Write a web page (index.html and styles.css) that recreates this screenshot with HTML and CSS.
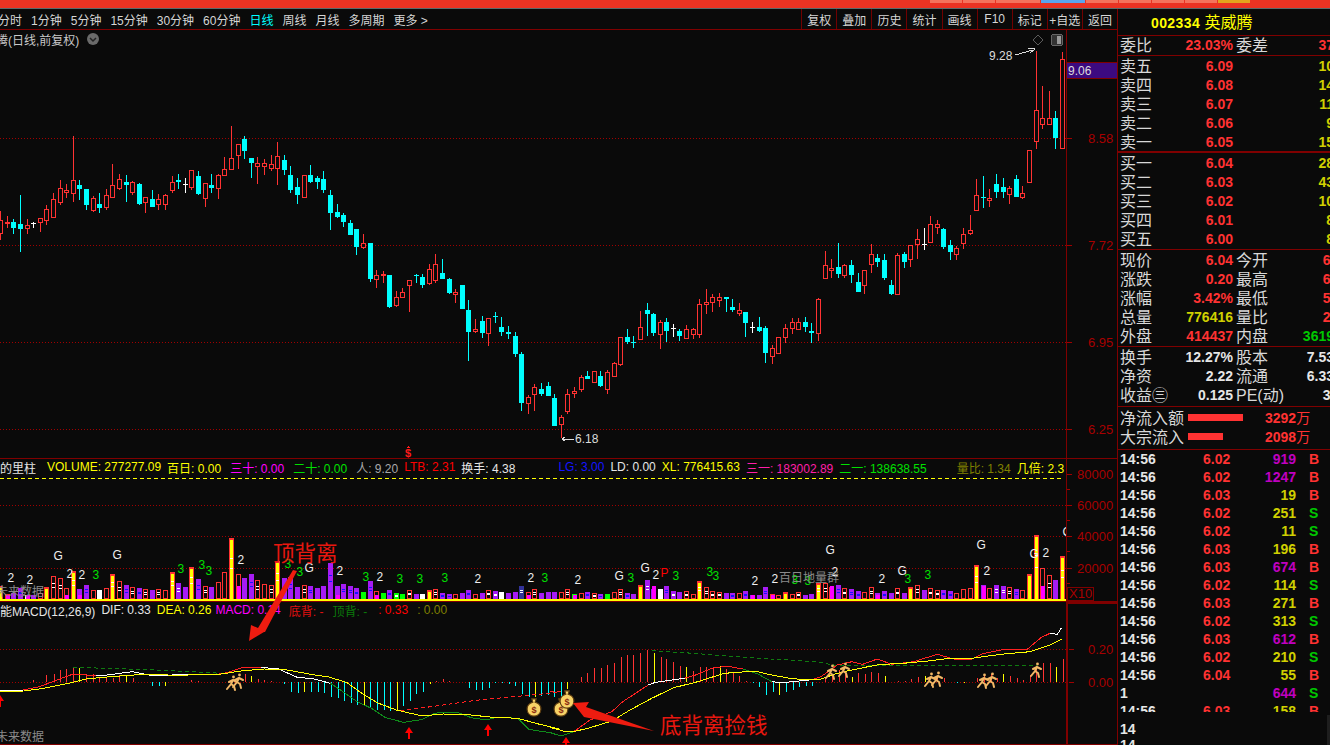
FILE: index.html
```html
<!DOCTYPE html>
<html lang="zh">
<head>
  <meta charset="UTF-8">
  <title>英威腾 日线</title>
  <link rel="stylesheet" href="styles.css">
</head>
<body>
  <div class="app">
    <div class="topbar">
      <span class="tab"></span><span class="tab"></span><span class="tab tab-wide"></span><span class="tab tab-wide tab-blue"></span>
      <span class="tab"></span><span class="tab"></span><span class="tab"></span><span class="tab"></span><span class="tab tab-yellow"></span>
    </div>
    <div class="main">
      <div class="left">
        <div class="toolbar">
          <div class="periods">
            <span>分时</span><span>1分钟</span><span>5分钟</span><span>15分钟</span><span>30分钟</span><span>60分钟</span>
            <span class="active">日线</span><span>周线</span><span>月线</span><span>多周期</span><span>更多 &gt;</span>
          </div>
          <div class="tools">
            <span>复权</span><span>叠加</span><span>历史</span><span>统计</span><span>画线</span><span>F10</span><span>标记</span><span>+自选</span><span>返回</span>
          </div>
        </div>

        <div class="pane pane-price">
          <div class="plot">
            <svg class="chart" id="priceChart"></svg>
            <div class="pane-title">
              <span class="stock-title">腾(日线,前复权)</span>
              <svg class="title-btn" viewBox="0 0 12 12">
                <circle cx="6" cy="6" r="6" fill="#6a6a6a"/>
                <path d="M3 5l3 3 3-3" fill="none" stroke="#222" stroke-width="1.5"/>
              </svg>
            </div>
          </div>
          <div class="axis"><svg class="chart" id="priceAxis"></svg></div>
        </div>

        <div class="pane pane-vol">
          <div class="plot">
            <svg class="chart" id="volChart"></svg>
            <div class="legend">
              <span class="c-white first">的里柱</span>
              <span class="c-yellow">VOLUME: 277277.09</span>
              <span class="c-yellow">百日: 0.00</span>
              <span class="c-magenta wide">三十: 0.00</span>
              <span class="c-green wide">二十: 0.00</span>
              <span class="c-gray wide">人: 9.20</span>
              <span class="c-red">LTB: 2.31</span>
              <span class="c-white">换手: 4.38</span>
              <span class="c-blue gap-lg">LG: 3.00</span>
              <span class="c-white">LD: 0.00</span>
              <span class="c-yellow">XL: 776415.63</span>
              <span class="c-pink">三一: 183002.89</span>
              <span class="c-green">二一: 138638.55</span>
              <span class="c-olive gap-sm">量比: 1.34</span>
              <span class="c-yellow">几倍: 2.3</span>
            </div>
          </div>
          <div class="axis"><svg class="chart" id="volAxis"></svg></div>
        </div>

        <div class="pane pane-macd">
          <div class="plot">
            <svg class="chart" id="macdChart"></svg>
            <div class="legend">
              <span class="c-white first">能MACD(12,26,9)</span>
              <span class="c-white">DIF: 0.33</span>
              <span class="c-yellow m2">DEA: 0.26</span>
              <span class="c-magenta">MACD: 0.14</span>
              <span class="c-darkred m4">底背: -</span>
              <span class="c-darkgreen m5">顶背: -</span>
              <span class="c-red m7">: 0.33</span>
              <span class="c-olive m5">: 0.00</span>
            </div>
          </div>
          <div class="axis axis-macd"><svg class="chart" id="macdAxis"></svg></div>
        </div>

        <svg class="overlay" id="notes"></svg>
      </div>

      <div class="right">
        <div class="stock-head"><b>002334</b> 英威腾</div>

        <div class="group">
          <div class="row row-ratio"><span>委比</span><b class="red">23.03%</b><span class="label2">委差</span><b class="red">37</b></div>
        </div>
        <div class="group group-thick">
          <div class="row"><span>卖五</span><b class="red">6.09</b><i></i><b class="yellow">10</b></div>
          <div class="row"><span>卖四</span><b class="red">6.08</b><i></i><b class="yellow">14</b></div>
          <div class="row"><span>卖三</span><b class="red">6.07</b><i></i><b class="yellow">11</b></div>
          <div class="row"><span>卖二</span><b class="red">6.06</b><i></i><b class="yellow">9</b></div>
          <div class="row"><span>卖一</span><b class="red">6.05</b><i></i><b class="yellow">15</b></div>
        </div>
        <div class="group group-pad">
          <div class="row"><span>买一</span><b class="red">6.04</b><i></i><b class="yellow">28</b></div>
          <div class="row"><span>买二</span><b class="red">6.03</b><i></i><b class="yellow">43</b></div>
          <div class="row"><span>买三</span><b class="red">6.02</b><i></i><b class="yellow">10</b></div>
          <div class="row"><span>买四</span><b class="red">6.01</b><i></i><b class="yellow">8</b></div>
          <div class="row"><span>买五</span><b class="red">6.00</b><i></i><b class="yellow">8</b></div>
        </div>
        <div class="group group-pad">
          <div class="row"><span>现价</span><b class="red">6.04</b><span class="label2">今开</span><b class="red far">6.00</b></div>
          <div class="row"><span>涨跌</span><b class="red">0.20</b><span class="label2">最高</span><b class="red far">6.13</b></div>
          <div class="row"><span>涨幅</span><b class="red">3.42%</b><span class="label2">最低</span><b class="red far">5.93</b></div>
          <div class="row"><span>总量</span><b class="yellow">776416</b><span class="label2">量比</span><b class="red far">2.36</b></div>
          <div class="row"><span>外盘</span><b class="red">414437</b><span class="label2">内盘</span><b class="green">3619</b></div>
        </div>
        <div class="group group-fin">
          <div class="row"><span>换手</span><b>12.27%</b><span class="label2">股本</span><b>7.53</b></div>
          <div class="row"><span>净资</span><b>2.22</b><span class="label2">流通</span><b>6.33</b></div>
          <div class="row"><span>收益㊂</span><b>0.125</b><span class="label2">PE(动)</span><b class="far">36.2</b></div>
        </div>
        <div class="group group-flow">
          <div class="flow"><span class="flow-name">净流入额</span><div class="flow-track"><div class="flow-bar" style="width:55px"></div></div><span class="flow-val"><b>3292</b>万</span></div>
          <div class="flow"><span class="flow-name">大宗流入</span><div class="flow-track"><div class="flow-bar" style="width:35px"></div></div><span class="flow-val"><b>2098</b>万</span></div>
        </div>

        <div class="trades">
          <div class="trade"><span>14:56</span><span class="red">6.02</span><span class="vol purple">919</span><span class="red">B</span></div>
          <div class="trade"><span>14:56</span><span class="red">6.02</span><span class="vol purple">1247</span><span class="red">B</span></div>
          <div class="trade"><span>14:56</span><span class="red">6.03</span><span class="vol">19</span><span class="red">B</span></div>
          <div class="trade"><span>14:56</span><span class="red">6.02</span><span class="vol">251</span><span class="green">S</span></div>
          <div class="trade"><span>14:56</span><span class="red">6.02</span><span class="vol">11</span><span class="green">S</span></div>
          <div class="trade"><span>14:56</span><span class="red">6.03</span><span class="vol">196</span><span class="red">B</span></div>
          <div class="trade"><span>14:56</span><span class="red">6.03</span><span class="vol purple">674</span><span class="red">B</span></div>
          <div class="trade"><span>14:56</span><span class="red">6.02</span><span class="vol">114</span><span class="green">S</span></div>
          <div class="trade"><span>14:56</span><span class="red">6.03</span><span class="vol">271</span><span class="red">B</span></div>
          <div class="trade"><span>14:56</span><span class="red">6.02</span><span class="vol">313</span><span class="green">S</span></div>
          <div class="trade"><span>14:56</span><span class="red">6.03</span><span class="vol purple">612</span><span class="red">B</span></div>
          <div class="trade"><span>14:56</span><span class="red">6.02</span><span class="vol">210</span><span class="green">S</span></div>
          <div class="trade"><span>14:56</span><span class="red">6.04</span><span class="vol">55</span><span class="red">B</span></div>
          <div class="trade"><span>1</span><span class="red"></span><span class="vol purple">644</span><span class="green">S</span></div>
          <div class="trade"><span>14:56</span><span class="red">6.03</span><span class="vol">158</span><span class="red">B</span></div>
        </div>
        <div class="trade-tail">
          <div>14</div>
          <div>14</div>
        </div>
        <div class="scroll-stub"></div>
      </div>
    </div>
  </div>
  <script src="chart.js"></script>
</body>
</html>
```

FILE: styles.css
```css
:root {
  --bg: #0a0a0a;
  --line: #800000;
  --red: #ff3232;
  --text: #dcdcdc;
}
* { box-sizing: border-box; }
html, body { margin: 0; height: 100%; background: var(--bg); overflow: hidden; }
body {
  font-family: "Liberation Sans", "Noto Sans CJK SC", sans-serif;
  font-size: 12px;
  color: var(--text);
}
.app {
  width: 1330px;
  height: 745px;
  display: flex;
  flex-direction: column;
  overflow: hidden;
}

/* top strip */
.topbar {
  height: 9px;
  flex: none;
  display: flex;
  gap: 1px;
  padding-left: 930px;
  background: #ea3323;
  border-bottom: 1px solid #5a6a6a;
}
.tab { width: 32px; height: 3px; background: #f4735c; }
.tab-wide { width: 44px; }
.tab-blue { background: #5aa5ee; }
.tab-yellow { background: #e3a31c; }

.main { flex: 1; display: flex; min-height: 0; }
.left {
  width: 1118px;
  flex: none;
  position: relative;
  display: flex;
  flex-direction: column;
  border-right: 1px solid var(--line);
}

/* toolbar */
.toolbar {
  height: 21px;
  flex: none;
  display: flex;
  justify-content: space-between;
  align-items: stretch;
  border-bottom: 1px solid var(--line);
  color: #d6d6d6;
}
.periods { display: flex; gap: 9px; align-items: center; margin-left: -2px; }
.periods .active { color: #00ffff; }
.tools { display: flex; }
.tools span {
  width: 35.1px;
  display: flex;
  align-items: center;
  justify-content: center;
  border-left: 1px solid #700000;
  white-space: nowrap;
}

/* chart panes */
.pane { display: flex; flex: none; border-bottom: 1px solid var(--line); }
.pane-price { height: 429px; }
.pane-vol { height: 143px; }
.pane-macd { flex: 1; }
.plot { width: 1066px; flex: none; position: relative; overflow: hidden; }
.axis { flex: 1; position: relative; border-left: 1px solid var(--line); }
.axis-macd { border-left-width: 2px; border-top: 2px solid var(--line); }
.chart { position: absolute; left: 0; top: 0; width: 100%; height: 100%; shape-rendering: crispEdges; }
.overlay { position: absolute; left: 0; top: 0; width: 100%; height: 100%; pointer-events: none; }

.pane-title { position: relative; display: flex; align-items: center; gap: 8px; height: 18px; margin-left: -4px; }
.stock-title { color: #c8c8c8; font-size: 12px; white-space: nowrap; }
.title-btn { width: 12px; height: 12px; }

.legend { position: relative; display: flex; gap: 6px; height: 16px; align-items: center; white-space: nowrap; }
.legend .first { margin-right: 5px; }
.legend .wide { margin-left: 3px; }
.legend .gap-sm { margin-left: 24px; }
.legend .gap-lg { margin-left: 37px; }
.pane-macd .legend { gap: 4px; }
.pane-macd .legend .first { margin-right: 2px; }
.legend .m2 { margin-left: 2px; }
.legend .m4 { margin-left: 4px; }
.legend .m5 { margin-left: 5px; }
.legend .m7 { margin-left: 7px; }
.c-white { color: #e6e6e6; }
.c-yellow { color: #ffff00; }
.c-magenta { color: #ff00ff; }
.c-pink { color: #ff1fa8; }
.c-green { color: #00e000; }
.c-gray { color: #a8a8a8; }
.c-red { color: #ff0000; }
.c-darkred { color: #e01010; }
.c-blue { color: #1414ff; }
.c-olive { color: #808000; }
.c-darkgreen { color: #0a7a0a; }

/* svg text */
text { font-family: "Liberation Sans", "Noto Sans CJK SC", sans-serif; shape-rendering: auto; }
.t-axis { fill: #a80000; font-size: 13px; }
.t-price { fill: #dcdcdc; font-size: 12px; }
.t-mark { fill: #f0f0f0; font-size: 12px; }
.t-mark3 { fill: #00e000; font-size: 12px; }
.t-markp { fill: #ff0000; font-size: 12px; }
.t-faint { fill: #8a8a8a; font-size: 12px; }
.t-note { fill: #e8170f; font-size: 21.5px; }
.t-bag { fill: #8a2a10; font-size: 8px; font-weight: bold; }
.t-sell { fill: #ff1a1a; font-size: 11px; font-weight: bold; }

/* quote panel */
.right { flex: 1; position: relative; overflow: hidden; font-size: 16px; color: #d8d8d8; }
.stock-head {
  height: 27px;
  padding-left: 33px;
  color: #ffff00;
  line-height: 28px;
  border-bottom: 1px solid var(--line);
}
.stock-head b { font-size: 14px; letter-spacing: 0.4px; }
.group { border-bottom: 1px solid var(--line); padding-left: 2px; }
.group-thick { border-bottom-width: 2px; }
.group-pad { padding-bottom: 1px; }
.group-fin { padding-bottom: 2px; }
.group-flow { padding-top: 1px; padding-bottom: 3px; }
.row {
  display: grid;
  grid-template-columns: 50px 63px 51px 66px;
  height: 19px;
  line-height: 21px;
  white-space: nowrap;
}
.row-ratio { line-height: 19px; }
.row b {
  font-size: 14px;
  text-align: right;
  color: #e6e6e6;
}
.row b:last-child { padding-right: 16px; }
.row b.far:last-child { padding-right: 0; }
.label2 { padding-left: 3px; }
.red, .row b.red { color: var(--red); }
.yellow, .row b.yellow { color: #d0d000; }
.green, .row b.green { color: #00c800; }
.purple { color: #c000c0; }

.flow { display: flex; height: 19px; line-height: 21px; white-space: nowrap; }
.flow-name { width: 68px; }
.flow-track { width: 77px; display: flex; align-items: center; }
.flow-bar { height: 7px; background: var(--red); }
.flow-val { color: var(--red); font-size: 14px; }

.trades { height: 262px; overflow: hidden; padding-left: 2px; font-weight: bold; font-size: 14px; }
.trade { display: grid; grid-template-columns: 83px 40px 53px 20px; height: 18px; line-height: 18px; color: #e6e6e6; }
.trade .vol { text-align: right; color: #d0d000; }
.trade .vol.purple { color: #c000c0; }
.trade .green { padding-left: 13px; color: #00c800; }
.trade .red:last-child { padding-left: 13px; }
.trade-tail { margin-top: 9px; padding-left: 2px; font-size: 14px; font-weight: bold; line-height: 16px; color: #e6e6e6; }
.scroll-stub { position: absolute; right: 0; bottom: 0; width: 3px; height: 30px; background: #1e1e1e; }
```

FILE: chart.js
```js
// candle rows: type, body top, body bottom, wick top, wick bottom (3x crop coords + offset)
const candleBlocks = [
  [120, [
    ['r',300,342,273,360],['r',306,312,288,324],['c',306,324,297,342],['c',312,327,225,396],['r',316,327,297,342],
    ['w',309,312,306,324],['r',294,309,294,336],['r',267,303,255,315],['r',237,294,219,294],['r',204,249,180,255],
    ['r',210,219,192,234],['r',180,222,48,246],['c',195,207,180,240],['c',207,255,207,270],['r',234,273,228,276],
    ['c',252,264,219,279],['r',225,264,207,270],['r',195,234,132,234],['r',177,207,162,210],['c',186,195,165,246],
    ['r',186,219,183,225],['c',192,252,189,255],['r',231,249,231,279],['c',237,261,210,261],['r',237,255,222,270],
    ['r',225,255,222,270],['r',186,213,168,219],['c',180,186,162,207],['w',192,195,174,219],['r',150,204,150,210],
    ['c',168,222,153,225],['r',189,237,189,261],['c',195,204,162,219],['r',165,207,162,237],['r',147,168,111,168],
    ['r',114,150,18,150],['r',72,108,72,147],['c',57,93,48,117],['c',114,129,114,174],['r',129,141,111,192],
    ['r',129,141,117,165],['r',132,147,105,153],['r',108,147,66,195],['c',120,150,105,165],['c',165,210,138,219],
    ['c',201,225,174,252],['r',165,234,165,234],['c',165,186,135,189],['c',174,186,168,207],['c',177,210,153,219],
    ['c',225,279,210,330],['c',276,291,252,294],['c',285,306,279,321],['c',309,345,300,345],['c',327,381,327,405],
    ['r',369,384,342,387],['c',369,477,369,486],['r',465,480,450,504],['r',462,468,453,489],['c',465,561,465,564],
    ['r',531,558,513,561]
  ]],
  [240, [
    ['r',156,174,144,174],['r',120,138,120,216],['c',105,108,102,129],['c',111,135,102,144],['r',87,132,72,135],
    ['r',72,123,42,129],['c',99,117,57,117],['c',117,159,114,162],['r',156,165,147,189],['c',135,207,135,207],
    ['c',210,276,180,363],['r',267,276,237,279],['c',243,279,228,294],['r',234,282,234,318],['c',228,231,216,249],
    ['c',261,276,231,288],['c',276,282,258,297],['c',288,342,276,351],['c',342,489,336,513],['r',471,492,465,522],
    ['r',441,465,432,513],['c',447,462,429,468],['c',438,468,426,468],['c',474,558,462,558],['r',531,555,525,594],
    ['r',462,516,447,522],['r',453,461,441,474],['r',411,450,405,456],['c',408,417,393,417],['r',393,429,393,429],
    ['c',408,438,393,441],['r',396,450,390,462],['r',369,411,366,411],['r',291,375,291,378],['c',291,306,267,312],
    ['c',306,309,288,324],['r',261,300,213,300],['c',210,222,189,288],['c',222,279,219,288],['r',246,285,240,327],
    ['c',246,273,234,306],['w',264,267,252,291],['c',273,288,267,303],['r',267,297,255,297],['r',267,285,264,297],
    ['r',192,285,177,294],['r',186,195,147,222],['r',171,189,162,216],['r',171,183,159,201],['c',171,177,171,216],
    ['c',201,210,177,216],['r',210,222,189,228],['c',216,249,216,291],['w',261,264,246,279],['c',261,273,231,276],
    ['c',264,339,258,369],['r',324,351,315,372],['r',291,342,291,342],['r',264,294,252,309],['r',246,267,234,282],
    ['r',246,270,234,270],['c',246,261,231,276],['c',273,279,249,309],['r',177,282,174,303],['r',75,117,33,117],
    ['r',84,93,57,114],['c',81,102,9,114]
  ]],
  [160, [
    ['r',315,348,312,354],['c',315,345,300,369],['c',366,396,339,396],['r',330,378,330,402],['r',282,315,252,339],
    ['c',294,306,282,321],['c',300,354,282,360],['c',375,402,360,405],['r',285,405,279,405],['c',282,306,276,324],
    ['r',255,300,255,321],['r',237,255,207,297],['w',252,255,204,270],['r',192,249,168,249],['r',192,204,180,222],
    ['c',207,261,204,267],['c',255,276,240,300],['r',264,285,258,300],['r',222,252,204,267],['r',210,221,165,225],
    ['r',105,153,57,153],['c',111,114,48,144],['r',114,122,87,141],['c',72,96,42,114],['c',81,96,54,114],
    ['r',84,105,78,132],['c',57,111,45,111],['r',99,114,78,117]
  ]],
  [0, [
    ['r',450,548,450,548],['r',330,425,153,447],['r',355,376,258,386],['r',355,376,273,376],['c',354,414,333,447],
    ['r',178,446,156,446]
  ]]
];

// volume bars: crop y of the bar top + colour (r,p,y,g,w,n) + flags (t ticks, T white ticks, m/M magenta foot)
const volBars = (
  '437y 462rm 460p 445pt 466wm 465p 460r 440y 408rt 414rt 445rm 394yt 447pm 435pt 450r 450w 444r 403yt 423rt 435pt ' +
  '441rt 444pt 448rt 450p 447rt 450r 397yt 429pT 441p 382yt 417pt 438rt 441p 426r 396r 294yt 402rM 414p 402pt 420rt ' +
  '432r 435rt 364yt 414p 411pt 441p 435rt 438pt 444p 438p 369pt 438pm 432pt 438pt 444pt 456g 423pt 453rm 459g 450pt ' +
  '459gT 462g 450rt 462p 462w 450y 447rt 459pt 462pt 462r 459p 450pt 462r 459p 450rt 453pT 456w 459p 456p 438nt ' +
  '456rm 447rt 459p 456p ' +
  '456p 456r 447rt 462gm 459r 456pt 459rt 462pt 462g 456r 447rt 459pt 462p 435y 420pT 447pM 447w 438pt 453pT 456p ' +
  '453rt 462r 423yt 441rt 453rt 456rt 459p 459pt 459r 453pt 465pm 465p 441pt 462rm 465r 456y 462r 456rt 465p 462p ' +
  '429yt 429rt 441rM 435pt 444rt 447pt 453pt 456r 441rt 459pm 453pt 459p 444rt 459p 441y 435rt 450p 444rt 450rt 450pt ' +
  '453pt 459r 447r 444r 375yt 435pM 444r 435pT 438pT 441rt 447pt 450r 402y 285yt 384rM 405rt 420p 348yt'
).split(' ');

const volMarks = [
  ['2',11,578],['2',30,580],['G',57,556],['2',70,574],['2',82,575],['3',96,575],['G',116,555],['3',181,569],['3',202,565],
  ['3',209,571],['2',241,560],['3',288,564],['3',300,572],['G',308,568],['2',340,571],['3',366,577],['2',380,577],['3',400,579],
  ['3',420,579],['3',445,578],['2',478,579],['2',531,578],['3',545,578],['2',578,580],['G',618,576],['3',631,578],['G',644,568],
  ['2',656,575],['P',664,573],['3',676,576],['3',710,572],['3',716,576],['2',755,581],['2',775,579],['3',795,580],['3',808,581],
  ['2',835,572],['G',829,550],['2',882,579],['G',901,571],['3',908,579],['3',928,575],['G',980,545],['2',987,571],['G',1033,554],
  ['2',1046,553],['G',1066,532]
];

// macd histogram, crop "x:y" with optional y suffix for a yellow bar; the two crops have different x scales
const histA = '92:255 130:240 150:238 168:224 186:222 205:218 222:218y 241:238 260:238 278:248 297:248 315:248 334:240 353:243y 371:248 ' +
  '426:272 445:273 463:272y 536:255 555:258 685:238 703:244y 722:252 740:254 760:258 796:268 815:290 834:294 852:290y 870:290 889:290 ' +
  '907:294 926:305 945:310 963:318 982:325 1000:330 1018:330y 1037:340 1055:345 1074:345 1092:348 1111:345y 1129:333 1148:318 1166:298 ' +
  '1184:290 1203:266y 1221:258 1240:253 1258:258 1313:278 1332:285 1350:285 1369:278 1387:264 1406:265 1424:266 1443:272 1461:298 ' +
  '1480:305 1498:305y 1516:302 1535:300';
const histB = '12:305 30:305 48:283y 85:246 103:235 122:220 139:220 157:210 176:205 195:185 213:180 229:180 248:175 268:165 285:175y ' +
  '304:185 320:193 339:200 357:212 375:217y 394:228 412:215 430:216 449:215 467:213y 485:222 503:232 521:243 540:258 557:265 576:275 ' +
  '594:300 612:292 631:300y 648:290 667:285 684:277 703:272 721:272 756:250 775:236 794:225 812:230 830:245y 848:233 866:238 884:232 ' +
  '903:235 921:243y 939:260 957:258 975:258 993:252 1012:246 1030:244y 1065:250 1083:250 1102:260 1120:264 1138:264y 1157:262 1175:250 ' +
  '1193:238 1212:238 1228:250 1247:238y 1265:243 1283:250 1301:255 1320:240 1337:210 1355:205 1374:205 1392:216y 1410:192';

// crop coords to page coords for the macd pane
const ax = (x) => x / 2.8;
const bx = (x) => 550 + x / 2.75;
const my = (y) => 595 + y / 3;
const ptsA = (list) => list.map(([x, y]) => `${ax(x).toFixed(1)},${my(y).toFixed(1)}`).join(' ');
const ptsB = (list) => list.map(([x, y]) => `${bx(x).toFixed(1)},${my(y).toFixed(1)}`).join(' ');

const COLORS = { r: '#ff3232', c: '#00ffff', w: '#ffffff', p: '#a61cf5', y: '#ffff00', g: '#00ff00', n: '#33339a' };

function setup(id) {
  const el = document.getElementById(id);
  const r = el.getBoundingClientRect();
  el.setAttribute('viewBox', `${r.left} ${r.top} ${r.width} ${r.height}`);
  return el;
}
const rect = (x, y, w, h, fill) => `<rect x="${x}" y="${y}" width="${w}" height="${h}" fill="${fill}"/>`;
const hollow = (x, y, w, h, color) => rect(x, y, w, h, color) + rect(x + 1, y + 1, w - 2, Math.max(h - 2, 0), '#0a0a0a');
const hline = (x1, x2, y, color, dash) =>
  `<line x1="${x1}" x2="${x2}" y1="${y + 0.5}" y2="${y + 0.5}" stroke="${color}"${dash ? ` stroke-dasharray="${dash}"` : ''}/>`;
const poly = (points, color, dash) =>
  `<polyline points="${points}" fill="none" stroke="${color}"${dash ? ` stroke-dasharray="${dash}"` : ''}/>`;
const text = (x, y, str, cls) => `<text x="${x}" y="${y}" class="${cls}">${str}</text>`;

const barX = (i) => Math.floor(0.7 + i * 6.595);

function drawPrice() {
  let out = '';
  [138, 245, 342, 429].forEach((y) => { out += hline(0, 1066, y, '#a00000', '1 2'); });

  let i = 0;
  candleBlocks.forEach(([top, rows]) => {
    rows.forEach(([type, bt, bb, wt, wb]) => {
      const x = barX(i++);
      const y1 = Math.round(top + bt / 3);
      const y2 = Math.max(y1 + 1, Math.round(top + bb / 3));
      out += rect(x, Math.round(top + wt / 3), 1, Math.round((wb - wt) / 3), COLORS[type]);
      if (type === 'r') {
        out += hollow(x - 2, y1, 5, y2 - y1, COLORS.r);
      } else {
        out += rect(x - 2, y1, 5, y2 - y1, COLORS[type]);
      }
    });
  });

  // high / low labels
  out += text(989, 60, '9.28', 't-price');
  out += `<path d="M1015 55L1033 50M1028 48L1035 49L1030 53" fill="none" stroke="#dcdcdc"/>`;
  out += `<path d="M562 439H574M562 439l3-2M562 439l3 2" fill="none" stroke="#dcdcdc"/>`;
  out += text(575, 443, '6.18', 't-price');
  // top right buttons
  out += `<path d="M1038 35l5 5-5 5-5-5z" fill="none" stroke="#5c5c5c"/>`;
  out += `<rect x="1051.5" y="34.5" width="11" height="11" rx="2" fill="#333" stroke="#666"/>` + rect(1057, 36, 4, 8, '#999');
  // sell flag
  out += text(405, 457, '$', 't-sell');
  out += `<path d="M408 446l2 2h-4z" fill="#ff1a1a"/>`;
  setup('priceChart').innerHTML = out;

  let axis = '';
  [[138, '8.58'], [245, '7.72'], [342, '6.95'], [429, '6.25']].forEach(([y, label]) => {
    axis += hline(1067, 1072, y, '#a00000');
    axis += text(1088, y + 5, label, 't-axis');
  });
  axis += rect(1067, 62, 50, 17, '#800000') + rect(1067, 63, 50, 15, '#3c0a80');
  axis += text(1068, 75, '9.06', 't-price');
  setup('priceAxis').innerHTML = axis;
}

function drawVolume() {
  let out = '';
  [505, 536, 568].forEach((y) => { out += hline(0, 1066, y, '#a00000', '1 2'); });
  out += hline(0, 1063, 478, '#ffff00', '4 3');

  volBars.forEach((code, i) => {
    const m = code.match(/(\d+)(\w)(\w*)/);
    const type = m[2];
    const flags = m[3];
    const x = barX(i);
    const top = Math.round(440 + Number(m[1]) / 3);
    const h = 599 - top;
    if (type === 'r') {
      out += hollow(x - 2, top, 5, h, COLORS.r);
    } else if (type === 'y') {
      out += rect(x - 2, top, 5, h, COLORS.r) + rect(x - 1, top + 2, 3, h - 2, COLORS.y);
    } else {
      out += rect(x - 2, top, 5, h, COLORS[type]);
    }
    if (flags.includes('t') || flags.includes('T')) {
      const tick = type === 'p' && !flags.includes('T') ? '#1414ff' : '#ffffff';
      out += rect(x - 1, 599 - Math.round(h * 0.5), 3, 1, tick) + rect(x - 1, 599 - Math.round(h * 0.68), 3, 1, tick);
    }
    if (flags.includes('m')) out += rect(x - 1, 595, 4, 4, '#ff00ff');
    if (flags.includes('M')) out += rect(x - 1, 586, 4, 13, '#ff00ff');
  });
  out += rect(0, 599, 1066, 2, '#ffff00');

  volMarks.forEach(([ch, x, y]) => {
    const cls = ch === '3' ? 't-mark3' : ch === 'P' ? 't-markp' : 't-mark';
    out += text(x - 3.5, y + 4, ch, cls);
  });
  out += text(-4, 596, '未来数据', 't-faint');
  out += text(779, 582, '百日地量群', 't-faint');
  setup('volChart').innerHTML = out;

  let axis = '';
  [[474, '80000'], [505, '60000'], [536, '40000'], [568, '20000']].forEach(([y, label]) => {
    axis += hline(1067, 1072, y, '#a00000');
    axis += hline(1067, 1070, y + 15, '#a00000');
    axis += text(1077, y + 5, label, 't-axis');
  });
  axis += `<rect x="1067.5" y="587.5" width="26" height="13" fill="none" stroke="#800000"/>`;
  axis += text(1069, 598, 'X10', 't-axis');
  setup('volAxis').innerHTML = axis;
}

function histBars(list, toX) {
  return list.split(' ').map((item) => {
    const [xs, ys] = item.split(':');
    const v = parseInt(ys, 10);
    const x = Math.round(toX(Number(xs)));
    const y = Math.round(my(v));
    const color = ys.endsWith('y') ? '#ffff00' : v < 262 ? '#ff3232' : '#00ffff';
    return v < 262 ? rect(x, y, 1, 682 - y, color) : rect(x, 682, 1, y - 682, color);
  }).join('');
}

function drawMacd() {
  let out = '';
  out += hline(0, 1066, 649, '#a00000', '1 2') + hline(0, 1066, 682, '#a00000', '1 2');
  out += histBars(histA, ax) + histBars(histB, bx);

  // dashed guides
  out += poly(ptsA([[205, 217], [420, 224], [620, 235]]), '#0f7a0f', '4 3');
  out += poly(ptsB([[280, 167], [370, 173], [550, 188], [730, 200], [790, 212], [1340, 212]]), '#0f7a0f', '4 3');
  out += poly(ptsA([[1120, 348], [1340, 315], [1568, 292]]), '#ff2020', '4 3');
  out += poly(ptsB([[0, 290], [30, 288]]), '#ff2020', '4 3');

  // DIF
  const green = '#0f8a1a';
  const white = '#ffffff';
  const red = '#ff2020';
  out += poly(ptsA([[0, 288], [66, 285]]), white);
  out += poly(ptsA([[66, 285], [110, 275], [160, 255], [205, 237], [240, 240], [270, 243]]), red);
  out += poly(ptsA([[270, 243], [300, 240], [370, 230], [430, 243], [520, 238], [600, 240]]), white);
  out += poly(ptsA([[600, 240], [640, 232], [680, 217], [730, 217]]), red);
  out += poly(ptsA([[730, 217], [780, 222], [830, 246], [880, 252], [925, 265]]), white);
  out += poly(ptsA([[925, 265], [960, 290], [1000, 320], [1040, 340], [1080, 368], [1130, 382], [1180, 374], [1210, 358], [1230, 352], [1280, 352], [1320, 368], [1360, 375], [1390, 367], [1450, 370], [1480, 403], [1540, 413], [1568, 422]]), green);
  out += poly(ptsB([[0, 412], [30, 423], [65, 410]]), green);
  out += poly(ptsB([[65, 410], [110, 375], [170, 350], [200, 320], [270, 270]]), red);
  out += poly(ptsB([[270, 270], [290, 262], [370, 250]]), white);
  out += poly(ptsB([[370, 250], [400, 240], [450, 218], [490, 214], [530, 222]]), red);
  out += poly(ptsB([[530, 222], [570, 236], [610, 260]]), green);
  out += poly(ptsB([[610, 260], [640, 263], [720, 254]]), white);
  out += poly(ptsB([[720, 254], [745, 245], [790, 210], [830, 200], [860, 208], [900, 192], [940, 208], [1000, 200], [1065, 178], [1110, 192], [1160, 192], [1190, 176], [1250, 163], [1310, 165], [1350, 128], [1375, 115]]), red);
  out += poly(ptsB([[1375, 115], [1395, 118], [1407, 98]]), white);

  // DEA
  out += poly(ptsA([[0, 290], [66, 288], [110, 282], [160, 272], [205, 262], [240, 252], [300, 246], [400, 238], [500, 241], [620, 237], [680, 227], [740, 222], [800, 224], [870, 238], [920, 246], [970, 262], [1020, 300], [1060, 325], [1110, 345], [1170, 360], [1210, 360], [1240, 357], [1300, 358], [1380, 367], [1450, 370], [1500, 385], [1568, 403]]), '#ffff00');
  out += poly(ptsB([[0, 397], [40, 409], [65, 410], [110, 398], [170, 378], [220, 345], [280, 310], [340, 278], [400, 262], [480, 235], [540, 230], [570, 230], [610, 240], [660, 250], [700, 254], [740, 254], [790, 235], [830, 225], [880, 214], [910, 208], [960, 206], [1040, 198], [1100, 190], [1160, 190], [1240, 178], [1320, 170], [1370, 152], [1407, 133]]), '#ffff00');

  out += text(-4, 741, '未来数据', 't-faint');
  setup('macdChart').innerHTML = out;

  let axis = '';
  [[649, '0.20'], [682, '0.00']].forEach(([y, label]) => {
    axis += hline(1069, 1074, y, '#a00000');
    axis += text(1088, y + 5, label, 't-axis');
  });
  setup('macdAxis').innerHTML = axis;
}

// small pictures over the macd pane
function runner(x, y) {
  return `<g transform="translate(${x} ${y})" fill="none" stroke="#f3b866" stroke-width="2" stroke-linecap="round">` +
    `<circle cx="1.5" cy="-6" r="1.4" fill="#f3b866" stroke="none"/>` +
    `<path d="M1-3L-1 1L-5 6M-1 1L2 3L3 7M1-3L-3-1M1-3L5-1"/></g>`;
}
function bag(x, y) {
  return `<g transform="translate(${x} ${y}) scale(1.15)">` +
    `<path d="M-2-8h4l-1 3c4 1 5 4 5 6 0 4-3 6-6 6s-6-2-6-6c0-2 1-5 5-6z" fill="#f7d267" stroke="#5c3c10"/>` +
    `<text x="-2.2" y="4" class="t-bag">$</text></g>`;
}
function upArrow(x, y) {
  return `<path d="M${x} ${y - 6}l4 6h-3v6h-2v-6h-3z" fill="#ff0000"/>`;
}

function drawNotes() {
  let out = '';
  [[232, 683], [238, 681], [831, 672], [844, 670], [930, 680], [937, 679], [983, 681], [991, 680], [1036, 670]].forEach(([x, y]) => {
    out += runner(x, y);
  });
  [[534, 708], [561, 708], [567, 700]].forEach(([x, y]) => { out += bag(x, y); });
  [[0, 701], [409, 733], [488, 730], [566, 743]].forEach(([x, y]) => { out += upArrow(x, y); });

  // hand drawn arrows and captions
  out += `<path d="M249 641L251 625L258 628L293 570L297 571L265 632L264 632Z" fill="#ee1c10"/>`;
  out += `<path d="M573 703L589 702L586 707L654 731L584 717Z" fill="#ee1c10"/>`;
  out += text(273, 561, '顶背离', 't-note');
  out += text(660, 733, '底背离捡钱', 't-note');
  setup('notes').innerHTML = out;
}

drawPrice();
drawVolume();
drawMacd();
drawNotes();
```
